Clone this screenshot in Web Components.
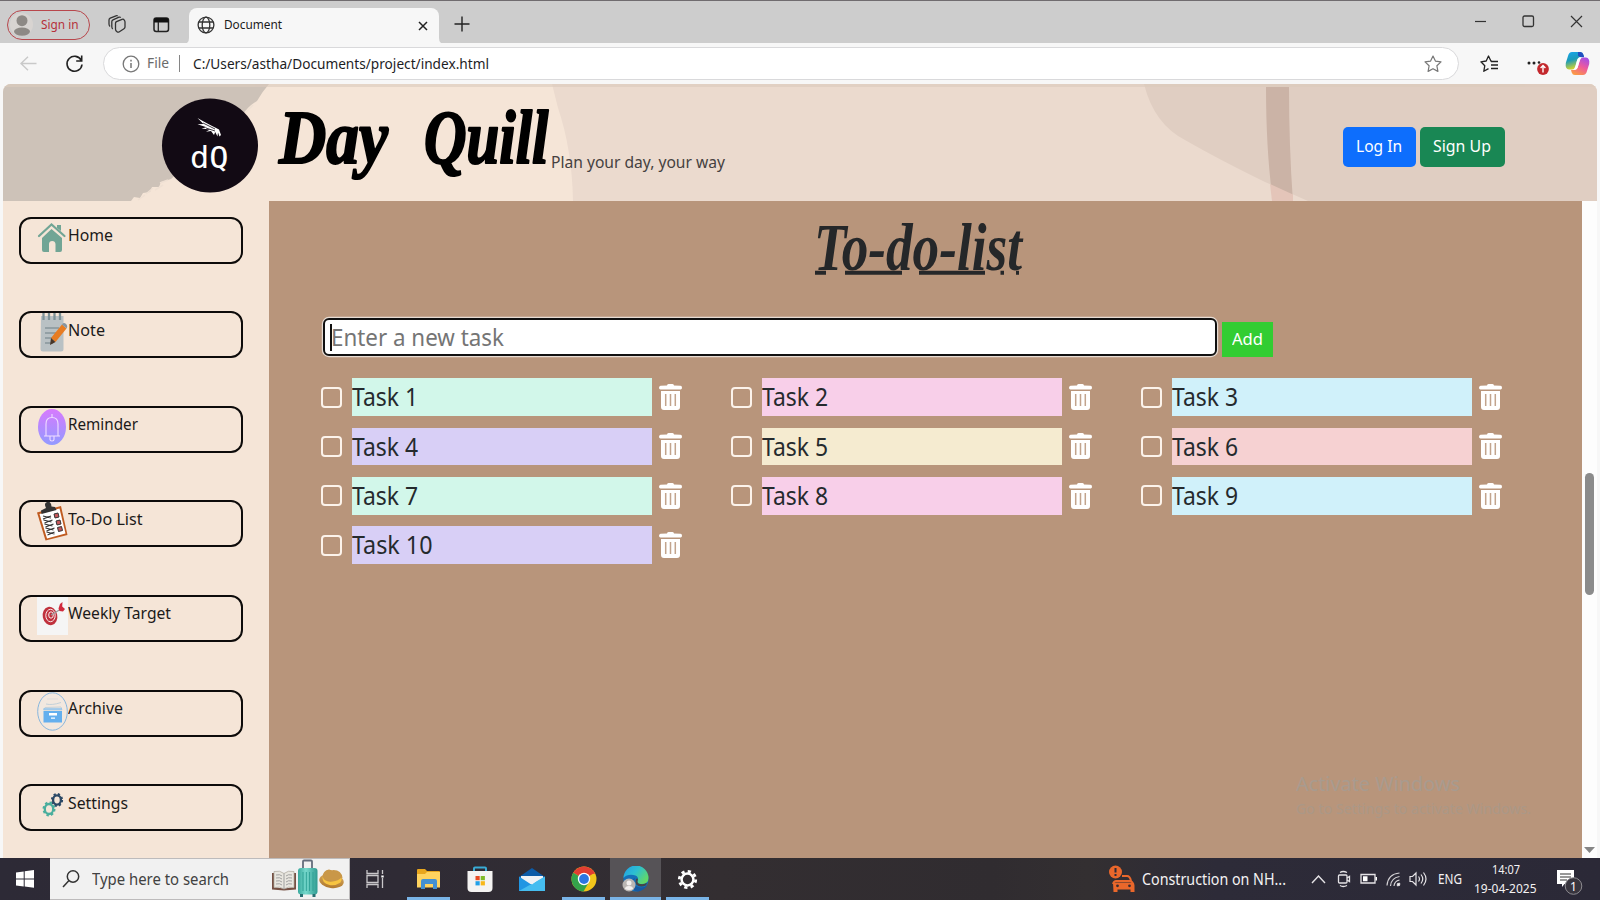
<!DOCTYPE html>
<html lang="en">
<head>
<meta charset="utf-8">
<title>Document</title>
<style>
html,body{margin:0;height:100%;overflow:hidden}
body{font-family:"Noto Sans","Open Sans",sans-serif;background:#f7f7f7}
</style>
</head>
<body>
<desk-screen></desk-screen>
<script>
const make = (name, html, extra) => customElements.define(name, class extends HTMLElement {
  constructor(){ super(); this.attachShadow({mode:'open'}); }
  connectedCallback(){
    if (this.ready) return;
    this.ready = true;
    this.shadowRoot.innerHTML = typeof html === 'function' ? html(this) : html;
    if (extra) extra(this);
  }
});

/* A one-line label that is condensed or widened to fill the given width */
make('fit-label', `<style>:host{display:block;flex:none;white-space:nowrap;line-height:1.36}span{display:inline-block;transform-origin:0 50%}</style><span><slot></slot></span>`, el => {
  const w = +el.getAttribute('w'), s = el.shadowRoot.querySelector('span');
  el.style.width = w + 'px';
  s.style.transform = `scaleX(${w / s.getBoundingClientRect().width})`;
});

make('tab-strip', `<style>
:host{display:flex;box-sizing:border-box;height:43px;background:#cdcdcd;border-top:1.5px solid #706c6f;align-items:flex-start;color:#1b1b1b;font-size:12.5px}
svg{display:block;flex:none}
.pill{display:flex;align-items:center;box-sizing:border-box;width:83px;height:30px;margin:8.5px 0 0 7px;border:1.5px solid #b8474c;border-radius:15px;color:#b5303a;padding-left:2px}
.pill fit-label{margin-left:8px}
.ic{margin:14px 0 0 17px}
.tab{display:flex;align-items:center;width:250px;height:36px;margin:6.5px 0 0 19px;background:#f7f7f7;border-radius:8px 8px 0 0;position:relative}
.tab fit-label{margin:-2px auto 0 9px}
.tab .x{margin-right:11px}
.foot{position:absolute;bottom:0;left:-6px;width:262px;height:6px}
.win{display:flex;margin:13.500px 17px 0 auto;gap:35px}
</style>
<div class="pill"><svg width="23" height="23"><circle cx="11.5" cy="11.5" r="11.5" fill="#d8d4d1"/><circle cx="12" cy="7.7" r="5.5" fill="#8d8985"/><ellipse cx="12" cy="18.6" rx="8" ry="4.2" fill="#8d8985"/></svg><fit-label w="37.5">Sign in</fit-label></div>
<svg class="ic" style="margin-left:18px" width="18" height="19" fill="none" stroke="#333" stroke-width="1.3" stroke-linejoin="round"><path d="M7.500 8.200q0-1 1-1.500L14 4.300q1.500-.6 2.300.8.7 1 .7 2v5q0 1-1 1.600l-5 3.300q-1 .5-2-.2-1.500-1-1.500-2.500zM4.700 14Q3.800 13 3.800 11.500V6.700q0-1.200 1.200-1.800L11 2.200q1-.3 1.800.4M2 11.500Q1 10.500 1 9V5q0-1.200 1.200-1.800L8 .8q1-.3 1.800.3"/></svg>
<svg style="margin:15.500px 0 0 27px" width="17" height="16"><rect x="1" y="1" width="14.500" height="13.500" rx="2.200" fill="none" stroke="#222" stroke-width="1.500"/><path d="M1 3q0-2 2-2h10.500q2 0 2 2v2.500H1z" fill="#111"/><path d="M5.300 5v9" stroke="#222" stroke-width="1.300"/></svg>
<div class="tab"><svg class="foot" viewBox="0 0 262 6"><path d="M0 6Q6 6 6 0V6zM262 6Q256 6 256 0V6z" fill="#f7f7f7"/></svg>
<svg style="margin:-2px 0 0 7.500px" width="18" height="18" fill="none" stroke="#333" stroke-width="1.300"><circle cx="9" cy="9" r="7.900"/><ellipse cx="9" cy="9" rx="3.800" ry="7.900"/><path d="M1.800 6h14.400M1.800 12h14.400"/></svg>
<fit-label w="58">Document</fit-label>
<svg class="x" width="10" height="10"><path d="M1 1l8 8M9 1L1 9" stroke="#222" stroke-width="1.500"/></svg></div>
<svg style="margin:15px 0 0 15px" width="16" height="16"><path d="M8 .5v15M.5 8h15" stroke="#222" stroke-width="1.400"/></svg>
<div class="win"><svg width="13" height="13"><path d="M1 6.500h11" stroke="#333" stroke-width="1.200"/></svg><svg width="13" height="13"><rect x="1" y="1" width="10.500" height="10.500" rx="1.500" fill="none" stroke="#333" stroke-width="1.300"/></svg><svg width="13" height="13"><path d="M1 1l11 11M12 1L1 12" stroke="#333" stroke-width="1.200"/></svg></div>`);

make('tool-bar', `<style>
:host{display:flex;box-sizing:border-box;height:41px;background:#f7f7f7;align-items:center;padding-left:20px;color:#1d1d1f;font-size:15px}
svg{display:block;flex:none}
.addr{display:flex;align-items:center;box-sizing:border-box;width:1356px;height:33px;margin-left:19.500px;border:1.500px solid #d9d9db;border-radius:17px;background:#fff;padding-left:17.500px}
.file{color:#6b6b6b;margin:-1px 0 0 7px}.sep{width:1.500px;height:17px;background:#858585;margin:0 12.500px 0 10px}
</style>
<svg width="17" height="15" fill="none" stroke="#c9c9c9" stroke-width="1.400"><path d="M16.500 7.500H1M8 .8L1 7.500l7 6.700"/></svg>
<svg style="margin-left:27.500px" width="19" height="20" fill="none" stroke="#222" stroke-width="1.600"><path d="M16.300 6.500A7.500 7.500 0 1 0 17 10.500M16.700 1.500V7h-5.500"/></svg>
<div class="addr">
<svg width="18" height="18"><circle cx="9" cy="9" r="7.800" fill="none" stroke="#777" stroke-width="1.300"/><path d="M9 8v5M9 4.800v1.600" stroke="#777" stroke-width="1.500"/></svg>
<fit-label class="file" w="22" style="font-size:14.500px">File</fit-label><i class="sep"></i><fit-label w="296" style="margin-top:-1px">C:/Users/astha/Documents/project/index.html</fit-label>
<svg style="margin:0 16px 0 auto" width="18" height="18" fill="none" stroke="#777" stroke-width="1.200" stroke-linejoin="round"><path d="M9 1l2.400 5.100 5.600.8-4.100 3.900 1 5.600L9 13.700l-4.900 2.700 1-5.600L1 6.900l5.600-.8z"/></svg></div>
<svg style="margin-left:20.500px" width="19" height="18" fill="none" stroke="#222" stroke-width="1.300" stroke-linejoin="round"><path d="M12 6.200h-1L8.500 1 6.200 6 .9 6.800 4.800 10.700 3.800 16.300 8.500 13.600M11 6.500h7M11 10h7M11 13.500h7"/></svg>
<svg style="margin:2px 0 0 28px" width="24" height="20"><g fill="#222"><circle cx="2" cy="8" r="1.500"/><circle cx="7" cy="8" r="1.500"/><circle cx="12" cy="7.500" r="1.300"/></g><circle cx="16" cy="14" r="5.900" fill="#c3282d"/><path d="M16 17.500v-6.500M13.600 13l2.400-2.400 2.400 2.400" fill="none" stroke="#fff" stroke-width="1.400"/></svg>
<svg style="margin-left:14px" width="25" height="25" viewBox="0 0 25 25"><defs><linearGradient id="a" x1="0" y1="0" x2=".3" y2="1"><stop stop-color="#17a5ee"/><stop offset=".5" stop-color="#1c9bb8"/><stop offset="1" stop-color="#d8d52b"/></linearGradient><linearGradient id="b" x1=".8" y1="0" x2=".3" y2="1"><stop stop-color="#a24de8"/><stop offset=".5" stop-color="#ee5a9c"/><stop offset="1" stop-color="#fb9a45"/></linearGradient></defs><path d="M7 1h8q2.500 0 3.300 2.500L19 6h-3q-3 0-3.800 3L10 16q-.8 2.500-3 2.500H4Q0 18 .8 12L3 5Q4 1 7 1z" fill="url(#a)"/><path d="M13 1h2.500q2.200 0 3 3l.6 2.300H16q-2 0-3-2z" fill="#204fc0"/><path d="M18 24h-8q-2.500 0-3.300-2.500L6 19h3q3 0 3.800-3L15 9q.8-2.500 3-2.500h3Q25 7 24.200 13L22 20q-1 4-4 4z" fill="url(#b)"/><path d="M12 9.500q.8-2.500 2.500-3h2q-1.200.8-1.800 3l-2 7q-.8 2-2.500 2.300H8.500q1.300-.6 2-3z" fill="#fff"/></svg>`);

make('site-header', `<style>
:host{display:flex;box-sizing:border-box;height:117px;position:relative;overflow:hidden;border-radius:8px 8px 0 0;background:#f5e5d7;align-items:flex-start;color:#454140}
.bg{position:absolute;left:0;top:0;z-index:-1}:host{isolation:isolate}
.logo{margin:14px 0 0 157.500px;flex:none}
.word{margin:18px 0 0 15px;flex:none;width:280px;overflow:visible}
fit-label{font-size:16.500px;margin:66.500px 0 0 -2.500px}
.btns{display:flex;gap:4px;margin:42.500px 92px 0 auto}
.btns div{display:flex;align-items:center;justify-content:center;height:40px;border-radius:5px;background:#0d6efd;color:#fff;width:73px}
.btns div+div{background:#198754;width:85px}
.btns fit-label{margin:0;font-size:16.500px}
</style>
<svg class="bg" width="1594" height="117"><path d="M0 0H266Q259 8 254 17 244 23 238 33L168 95 158 98 156 103 149 103 147 108 140 109 137 114 131 113 128 117H0z" fill="#cdc2b8"/><path d="M165 96l-8 3M160 101l-8 5M150 104l-7 6M142 111l-7 5M250 21l-8 8" stroke="#efe0d3" stroke-width="1.500"/><path d="M549 0H1594V117H570Q569 65 555 24z" fill="#ebdace"/><path d="M1141 0Q1151 40 1182 56 1215 75 1262 98L1305 117H1594V0z" fill="#e0cec2"/><path d="M1263 3h23q0 60 4 115h-20q-7-50-7-115z" fill="#cbb3a6"/><path d="M1267 100l23 10.500V117h-21z" fill="#e4c5b9"/><path d="M0 1.500H1594" stroke="#dccbbd" stroke-width="3" opacity=".6"/></svg>
<svg class="logo" width="98" height="96"><ellipse cx="49" cy="47.500" rx="48" ry="47" fill="#120a14"/><path d="M36.500 20Q45 25 58 31.500L60 37 58.500 38.500 57 34.500l-.5 4-2.300-4.500-1.200 3-3-4-5 .8 4-2.300-8.500-1 5-1.300-9-3 6-.2z" fill="#fff"/><path d="M42 25l12 6M45 30l9 3" stroke="#120a14" stroke-width=".8"/><text x="29" y="70" textLength="38.500" lengthAdjust="spacingAndGlyphs" font-family="DejaVu Sans Mono" font-size="31" font-weight="400" fill="#fff">dQ</text></svg>
<svg class="word" height="96" font-family="Liberation Serif" font-weight="700" font-style="italic" font-size="76" stroke="#000" stroke-width="2.200" stroke-linejoin="round"><text x="5" y="61" textLength="109" lengthAdjust="spacingAndGlyphs">Day</text><text x="150" y="61" textLength="124.500" lengthAdjust="spacingAndGlyphs">Quill</text></svg>
<fit-label w="174">Plan your day, your way</fit-label>
<div class="btns"><div><fit-label w="46">Log In</fit-label></div><div><fit-label w="58">Sign Up</fit-label></div></div>`);

const navIcons = {
 home:`<path d="M2 17L14.500 5.500 27.500 17" fill="none" stroke="#71a595" stroke-width="2.200" stroke-linecap="round"/><path d="M20 6h4v6l-4-3z" fill="#71a595"/><path d="M5 19L14.500 10 25 19V31q0 2-2 2H18.500V25q-.3-3-3.300-3t-3.200 3v8H7q-2 0-2-2z" fill="#71a595"/>`,
 note:`<path d="M4 3h22.500v33q0 2.500-2.500 2.500H6q-2.500 0-2.500-2.500z" fill="#b9c1c4"/><path d="M6.500 0v7M12 0v7M17.500 0v7M23 0v7" stroke="#7d9297" stroke-width="2.300"/><path d="M8 15h14M8 20h11M8 25h8M8 30h8" stroke="#86959a" stroke-width="1.300"/><path d="M14 25L25 11.500l4.500 4L18.500 29z" fill="#e77c22"/><path d="M14 25l4.500 4-5.500 3z" fill="#473629"/><path d="M25 11.500q1.800-2.500 4-.5t.5 4.500z" fill="#8795a0"/>`,
 bell:`<defs><linearGradient id="g" x2="0" y2="1"><stop stop-color="#d77afd"/><stop offset="1" stop-color="#929aff"/></linearGradient></defs><ellipse cx="15" cy="19" rx="14" ry="18" fill="url(#g)"/><path d="M7 28h16M9 28V16q0-6.500 6-6.500t6 6.500V28M15 6v3.500M13 28.500v3q0 1.500 2 1.500t2-1.500v-3" fill="none" stroke="#f0ddff" stroke-width="1.100"/>`,
 todo:`<path d="M0 10.500L24 4 30.500 33 8.500 38.500z" fill="#bf5b20"/><path d="M2.500 12L22.500 6.500 28.500 31.500 10 36.500z" fill="#fff"/><path d="M4 8.500l3-1.500 2-1Q6.500 1 10 0q4-1 4.500 4.500L18 5l1.500 3-15 4z" fill="#333"/><path d="M6 14l8 2M6.500 18l8 2M7.500 22l8 2M8.500 26l8 2M9.500 30l8 2M6 17l8-3M7.500 21l8-3M8.500 25l8-3M9.500 29l8-3M10.500 33l7-3" stroke="#333" stroke-width="1.200"/><g fill="#c8585c" stroke="#333"><path d="M17 12l4-1 1 4-4 1zM19 19l4-1 1 4-4 1zM20.500 25.500l4-1 1 4-4 1z"/></g>`,
 target:`<path d="M0 0H31V38H0z" fill="#f5f5f5"/><ellipse cx="13" cy="19" rx="7.300" ry="9.300" transform="rotate(-12 13 19)" fill="#c0313d"/><ellipse cx="13.500" cy="18.500" rx="4.700" ry="6.200" fill="none" stroke="#fff" stroke-width=".9"/><ellipse cx="14" cy="18" rx="2.300" ry="3.200" fill="none" stroke="#fff" stroke-width=".9"/><path d="M14 18l10-6" stroke="#999" stroke-width="1.200"/><path d="M21.500 11.500l1.500-4.500 2.500-2-.3 4.500 2.800 2.500-2 2.500-3.500-.5z" fill="#d02a3e"/>`,
 archive:`<ellipse cx="15.500" cy="19.500" rx="14.800" ry="18.700" fill="#f2e8df" stroke="#7cb0dc" stroke-width=".9"/><path d="M6.500 19h18.500V30.500H6.500z" fill="#64afee"/><path d="M8 15.500l16-.5 1 3H6.500zM9 12q6 1.500 15-1.500" fill="none" stroke="#c3d1d9"/><path d="M6.500 17h18.500" stroke="#8ec3ee" stroke-width="1.500"/><path d="M12 21h8v2.500h-8zM14 25.500h4v1.300h-4z" fill="#fff"/><path d="M10 7h11" stroke="#ddd"/>`,
 gears:`<g fill="none"><ellipse cx="20" cy="14" rx="3.900" ry="4.600" stroke="#2b4865" stroke-width="2.300"/><ellipse cx="20" cy="14" rx="5.100" ry="6" stroke="#2b4865" stroke-width="2" stroke-dasharray="2.200 2.200"/><ellipse cx="12" cy="23" rx="4.200" ry="5" stroke="#4aae9d" stroke-width="2.300"/><ellipse cx="12" cy="23" rx="5.500" ry="6.500" stroke="#4aae9d" stroke-width="2" stroke-dasharray="2.400 2.300"/></g>`
};
make('nav-item', el => `<style>
:host{display:flex;box-sizing:border-box;width:223.500px;height:47px;border:2px solid #0d0b0a;border-radius:12px;padding-left:15.700px;color:#1c1a19;font-size:16.500px;flex:none}
svg{flex:none;overflow:visible;display:block}
fit-label{margin-top:5.500px}
</style><svg width="31" height="38">${navIcons[el.getAttribute('icon')]}</svg><fit-label w="${el.getAttribute('w')}">${el.textContent}</fit-label>`);

make('side-nav', `<style>:host{display:flex;flex-direction:column;box-sizing:border-box;width:266px;padding:15.600px 0 0 16px;gap:47.600px;background:#f5e5d7;overflow:hidden;flex:none}</style>
<nav-item icon="home" w="45">Home</nav-item><nav-item icon="note" w="37">Note</nav-item><nav-item icon="bell" w="70">Reminder</nav-item><nav-item icon="todo" w="74.500">To-Do List</nav-item><nav-item icon="target" w="103">Weekly Target</nav-item><nav-item icon="archive" w="55">Archive</nav-item><nav-item icon="gears" w="60">Settings</nav-item>`);

make('task-item', el => `<style>
:host{display:flex;align-items:center;height:38px;width:361px;color:#252a2d;font-size:24.500px}
.box{box-sizing:border-box;width:21px;height:21px;border:2px solid #fcf3eb;border-radius:4px;margin-top:0}
.name{width:299.500px;height:37.500px;margin:0 7px 0 10.300px;background:${el.getAttribute('color')}}
fit-label{line-height:38px}
svg{display:block}
</style><span class="box"></span><div class="name"><fit-label w="${el.textContent.length>6?80.5:66}">${el.textContent}</fit-label></div>
<svg width="23" height="26"><path d="M8 1.500Q8 0 9.500 0h4Q15 0 15 1.500l6.500.3q1.500.2 1.500 2T21.500 5.500h-20Q0 5.500 0 3.800T1.500 1.800zM2 7h19V23q0 3-3 3H5q-3 0-3-3z" fill="#fff"/><path d="M6.700 10v12M11.500 10v12M16.300 10v12" stroke="#c2a48d" stroke-width="1.500"/></svg>`);

make('task-board', `<style>
:host{display:flex;flex-direction:column;box-sizing:border-box;flex:1;background:#b8957b;padding:15px 0 0 52px;overflow:hidden;position:relative}
h1{margin:0 0 0 490px;height:102px}
h1 svg{display:block;overflow:visible}
.form{display:flex;align-items:flex-start;height:60px;padding-left:2px}
.input{display:flex;align-items:center;box-sizing:border-box;width:894px;height:38px;background:#fff;border:2px solid #111;border-radius:6px;box-shadow:0 0 0 1.200px #e7dcd3;color:#757575;font-size:24px;padding-left:5px;margin-top:.4px}
.input i{width:1.500px;height:27px;background:#111}
.input fit-label{margin:-1px 0 0 -1px}
.add{display:flex;align-items:center;justify-content:center;width:51.500px;height:35px;margin:4px 0 0 4.500px;background:#32cd32;color:#fff;font-size:16.500px}
.grid{display:grid;grid-template-columns:repeat(3,410px);row-gap:11.400px}
.wm{position:absolute;left:1027px;top:568.500px;color:#a89b8f;font-size:20.500px}
.wm fit-label+fit-label{font-size:15px;margin-top:1px;color:#ab9887}
</style>
<h1><svg width="240" height="70"><text x="3" y="54" textLength="208" lengthAdjust="spacingAndGlyphs" font-family="Liberation Serif" font-style="italic" font-weight="700" font-size="68" fill="#252729">To-do-list</text><path d="M4 56.700h11M34 56.700h57M108 56.700h66M189.500 56.700h3.500M205 56.700h3" stroke="#252729" stroke-width="4"/></svg></h1>
<div class="form"><div class="input"><i></i><fit-label w="173">Enter a new task</fit-label></div><div class="add"><fit-label w="31">Add</fit-label></div></div>
<div class="grid">
<task-item color="#d2f7ea">Task 1</task-item><task-item color="#f8cfe9">Task 2</task-item><task-item color="#d0f1fa">Task 3</task-item>
<task-item color="#d8cff6">Task 4</task-item><task-item color="#f5ebd0">Task 5</task-item><task-item color="#f6d1d2">Task 6</task-item>
<task-item color="#d2f7ea">Task 7</task-item><task-item color="#f8cfe9">Task 8</task-item><task-item color="#d0f1fa">Task 9</task-item>
<task-item color="#d8cff6">Task 10</task-item></div>
<div class="wm"><fit-label w="164">Activate Windows</fit-label><fit-label w="235">Go to Settings to activate Windows.</fit-label></div>`);

make('scroll-rail', `<style>:host{display:flex;flex-direction:column;align-items:center;width:15px;background:#fdfdfd;flex:none}
i{width:9px;height:122px;margin-top:272px;border-radius:5px;background:#8b8b8b}svg{margin:auto 0 4px}</style><i></i><svg width="11" height="7"><path d="M0 0h11L5.500 6z" fill="#858585"/></svg>`);

make('app-button', `<style>:host{display:flex;box-sizing:border-box;align-items:center;justify-content:center;width:51px;height:42px;position:relative;flex:none}
:host([open])::after{content:"";position:absolute;left:4px;right:4px;bottom:0;height:3px;background:#79b4e7}
:host([active]){background:#565357}:host([active])::after{left:0;right:0}</style><slot></slot>`);

make('task-bar', `<style>
:host{display:flex;height:42px;background:linear-gradient(90deg,#2d2a36 0,#2f2b35 25%,#332e31 45%,#302c30 62%,#332f31 68%,#2d2b38 76%,#2b2937);color:#f4f2f3;align-items:center}
svg{display:block;flex:none}
.search{display:flex;align-items:center;box-sizing:border-box;width:300px;height:42px;background:#f1f1f1;border:1px solid #bdbbbc;border-left:0;color:#414141;font-size:16.500px;padding-left:12px}
.search fit-label{margin:0 auto 0 12px}
.tray{display:flex;align-items:center;height:42px;margin-left:auto;width:491px}
.clock{display:flex;flex-direction:column;align-items:center;margin-left:12px;font-size:12.500px;width:64px}
.clock fit-label{line-height:19px}
</style>
<app-button style="width:50px"><svg width="18" height="18" fill="#fff"><path d="M0 2.500L7.700 1.400V8.400H0zM8.700 1.300L18 0V8.400H8.700zM0 9.400H7.700V16.400L0 15.400zM8.700 9.400H18V17.800L8.700 16.600z"/></svg></app-button>
<div class="search"><svg width="18" height="18" fill="none" stroke="#333" stroke-width="1.500"><circle cx="11" cy="6.500" r="5.700"/><path d="M7 10.500L1 17"/></svg><fit-label w="137">Type here to search</fit-label>
<svg width="73" height="40" style="margin-right:4px"><defs><linearGradient id="s"><stop stop-color="#39a99d"/><stop offset=".4" stop-color="#77d9cd"/><stop offset="1" stop-color="#2f9b91"/></linearGradient><linearGradient id="h" x2="0" y2="1"><stop stop-color="#d8ab61"/><stop offset="1" stop-color="#b1792e"/></linearGradient></defs>
<path d="M0 14h2v15H0zM22 14h2v15h-2zM0 28l12 1.500L24 28v2.500L12 31.500 0 30.500z" fill="#755043"/><path d="M2 12.500Q8 11 12 14.500 16 11 22 12.500V28.500Q16 27 12 30 8 27 2 28.500z" fill="#e8e6df" stroke="#aaa69c" stroke-width=".7"/><path d="M12 14.500V30M4 16q4-1 6 1M4 19q4-1 6 1M4 22q4-1 6 1M4 25q4-1 6 1M14 17q2-2 6-1M14 20q2-2 6-1M14 23q2-2 6-1M14 26q2-2 6-1" stroke="#999" stroke-width=".9" fill="none"/>
<path d="M31 10V2.500q0-1 1-1h7q1 0 1 1V10" fill="none" stroke="#646d7c" stroke-width="1.800"/><rect x="26" y="9" width="19.500" height="26.500" rx="3" fill="url(#s)"/><path d="M31 13v19M34.300 13v19M37.600 13v19M41 13v19" stroke="#2fa195" stroke-width="1"/><path d="M28 35h3v3h-3zM40.500 35h3v3h-3z" fill="#276f72"/>
<ellipse cx="59.500" cy="22" rx="12.300" ry="7" transform="rotate(8 59.500 22)" fill="url(#h)"/><path d="M50 19q1-8 7-8.500 2.500 1 4.500.5 8 0 9 8-9 6-20.500 0z" fill="#c99748"/><path d="M50.500 17.500q2 6 10 5 6-.5 9-4 .5 3-1 5-5 3.500-11 2.500-8-2-7-8.500z" fill="#f7c441"/></svg></div>
<app-button><svg width="19" height="18" fill="none" stroke="#c9c7ca" stroke-width="1.300"><path d="M1 0v3.500h11V0M1 18v-3.500h11V18M1 5.500h11v7H1zM16.500 0v4M16.500 8v10"/><path d="M15.300 5.500h2.400v2h-2.400z" fill="#fff" stroke="none"/></svg></app-button>
<app-button open style="margin-left:2px"><svg width="25" height="22"><path d="M1 2q0-1 1-1h7l2 2h12q1 0 1 1v15H1z" fill="#e8a61d"/><path d="M1 6h8l2-2h13v15.500H1z" fill="#ffd35f"/><path d="M5 21v-8q0-2 2-2h12q2 0 2 2v8h-4v-5H9v5z" fill="#4390d2"/></svg></app-button>
<app-button><svg width="26" height="27"><path d="M7 6V2.500q0-1 1-1h10q1 0 1 1V6" fill="none" stroke="#39abd5" stroke-width="2"/><path d="M.5 5H25.500V22q0 4-4 4h-17q-4 0-4-4z" fill="#f4f3f2"/><path d="M8.500 10h4.200v4.200H8.500z" fill="#e74b25"/><path d="M13.700 10h4.200v4.200h-4.200z" fill="#80ba27"/><path d="M8.500 15.200h4.200v4.200H8.500z" fill="#22a0e8"/><path d="M13.700 15.200h4.200v4.200h-4.200z" fill="#f8b718"/></svg></app-button>
<app-button style="margin-left:1px"><svg width="26" height="25"><path d="M0 10L13 1l13 9v14H0z" fill="#0c5ba7"/><path d="M2 9h22v8H2z" fill="#f0f2f5"/><path d="M0 9.500L13 18 26 9.500V24H0z" fill="#2196e3"/><path d="M26 9.500V24H0z" fill="#46bdf0"/><path d="M2 9h22L13 17.500z" fill="#f0f2f5"/></svg></app-button>
<app-button open style="margin-left:1px"><svg width="26" height="26" viewBox="0 0 26 26"><circle cx="13" cy="13" r="12.500" fill="#f2c51b"/><path d="M13 13L2.200 6.700A12.500 12.500 0 0 1 23.800 6.700z" fill="#e23e32"/><path d="M2.200 6.700h21.600v1H13z" fill="#e23e32"/><path d="M13 13L2.200 6.700A12.500 12.500 0 0 0 12.500 25.500L18 16z" fill="#34a34b"/><circle cx="13" cy="13" r="6.200" fill="#fff"/><circle cx="13" cy="13" r="4.900" fill="#2d76e2"/></svg></app-button>
<app-button open active style="margin-left:1px"><svg width="27" height="27"><defs><linearGradient id="e" x2="1" y2=".6"><stop stop-color="#239ce5"/><stop offset=".5" stop-color="#2cbfd2"/><stop offset="1" stop-color="#61d867"/></linearGradient></defs><circle cx="14" cy="13" r="12.500" fill="#1470b9"/><path d="M1.500 12A12.500 12.500 0 0 1 26.500 12q0 6-7 6-5 0-4-3 2-5-4-6Q5 8 1.500 12z" fill="url(#e)"/><path d="M13 12q-4 8 5 9.500 4 .5 7-2-3 5-9 6-7-1-7-8 0-4 4-5.500z" fill="#1759a0"/><path d="M14 13q1.500-1 2 .5-1.500 3 1 4.300 5 1 8-1l-1 2.500q-6 3-10-1-1-3 0-5.300z" fill="#454548"/><circle cx="7" cy="19" r="6.500" fill="#bab6b3"/><circle cx="7" cy="17" r="2.500" fill="#f2efed"/><path d="M3 23q0-3 4-3t4 3q-4 2-8 0z" fill="#f2efed"/></svg></app-button>
<app-button open style="margin-left:1px"><svg width="21" height="21" fill="none" stroke="#fff"><circle cx="10.500" cy="10.500" r="5.900" stroke-width="2.500"/><circle cx="10.500" cy="10.500" r="8.200" stroke-width="2.800" stroke-dasharray="3.220 3.220"/></svg></app-button>
<div class="tray">
<svg width="26" height="28"><circle cx="6.500" cy="7" r="6.500" fill="#e9672b"/><path d="M6.500 3v4.500M6.500 9v2" stroke="#2d2b38" stroke-width="2"/><path d="M13 11h5q3 0 4 5M4 19q1-3 3-3h14q2 0 3 3" fill="none" stroke="#e9672b" stroke-width="2"/><path d="M4 17.500h20q1.500.5 1.500 3V27h-4v-2.500H8.500V27h-4z" fill="#e9672b"/><circle cx="8.500" cy="20.800" r="1.400" fill="#3a2b31"/><circle cx="20.500" cy="20.800" r="1.400" fill="#3a2b31"/></svg>
<fit-label w="144" style="font-size:16.500px;margin-left:7px">Construction on NH...</fit-label>
<svg style="margin-left:25px" width="15" height="9"><path d="M1 8l6.500-7L14 8" fill="none" stroke="#e5e3e6" stroke-width="1.400"/></svg>
<svg style="margin-left:11px" width="14" height="18" fill="none" stroke="#e5e3e6" stroke-width="1.300"><rect x="1.500" y="5" width="8.500" height="8" rx="1"/><path d="M10 8l2.500-1.500v5L10 10M3 2.500q3-2 7 0M3 15.500q3 2 7 0"/></svg>
<svg style="margin-left:9px" width="18" height="12"><path d="M1 1.500h14v8.500H1z" fill="none" stroke="#e5e3e6" stroke-width="1.300"/><path d="M3 3.300h4.500v5H3zM15.500 4h1.500v3.500h-1.500z" fill="#fff"/></svg>
<svg style="margin-left:8px" width="15" height="15" fill="none" stroke="#d5d3d6" stroke-width="1.200"><path d="M1 13.500Q2 2 13.500 1M4.500 14Q5 6 13.500 4.500M8 14q.5-5 5.500-6M11 14l3-3"/><circle cx="12.500" cy="12.500" r="1.200" fill="#fff"/></svg>
<svg style="margin-left:8px" width="19" height="16" fill="none" stroke="#e5e3e6" stroke-width="1.200"><path d="M1 5.500h2.500L7 2v12L3.500 10.500H1zM9.500 5.500q2 2.500 0 5M12 3.500q3.500 4.500 0 9M14.500 1.500q5 6.500 0 13"/></svg>
<fit-label w="24" style="font-size:13.500px;margin-left:9.500px">ENG</fit-label>
<div class="clock"><fit-label w="28">14:07</fit-label><fit-label w="62.500">19-04-2025</fit-label></div>
<svg style="margin:7px 0 0 18px" width="27" height="28"><path d="M1 1h17v14H8.500L6 18v-3H1z" fill="#fff"/><path d="M4 5h11M4 8h11M4 11h7" stroke="#333" stroke-width="1.200"/><circle cx="17.500" cy="17" r="8.300" fill="#38353e" stroke="#8d8b90"/><text x="17.500" y="21.500" text-anchor="middle" font-size="12" font-family="Noto Sans" fill="#fff">1</text></svg>
</div>`);

make('desk-screen', `<style>
:host{display:flex;flex-direction:column;width:1600px;height:900px}
.page{display:flex;flex-direction:column;height:774px;margin:0 3.500px 0 3px}
.body{display:flex;height:657px}
</style><tab-strip></tab-strip><tool-bar></tool-bar>
<div class="page"><site-header></site-header><div class="body"><side-nav></side-nav><task-board></task-board><scroll-rail></scroll-rail></div></div>
<task-bar></task-bar>`);
</script>
</body>
</html>
